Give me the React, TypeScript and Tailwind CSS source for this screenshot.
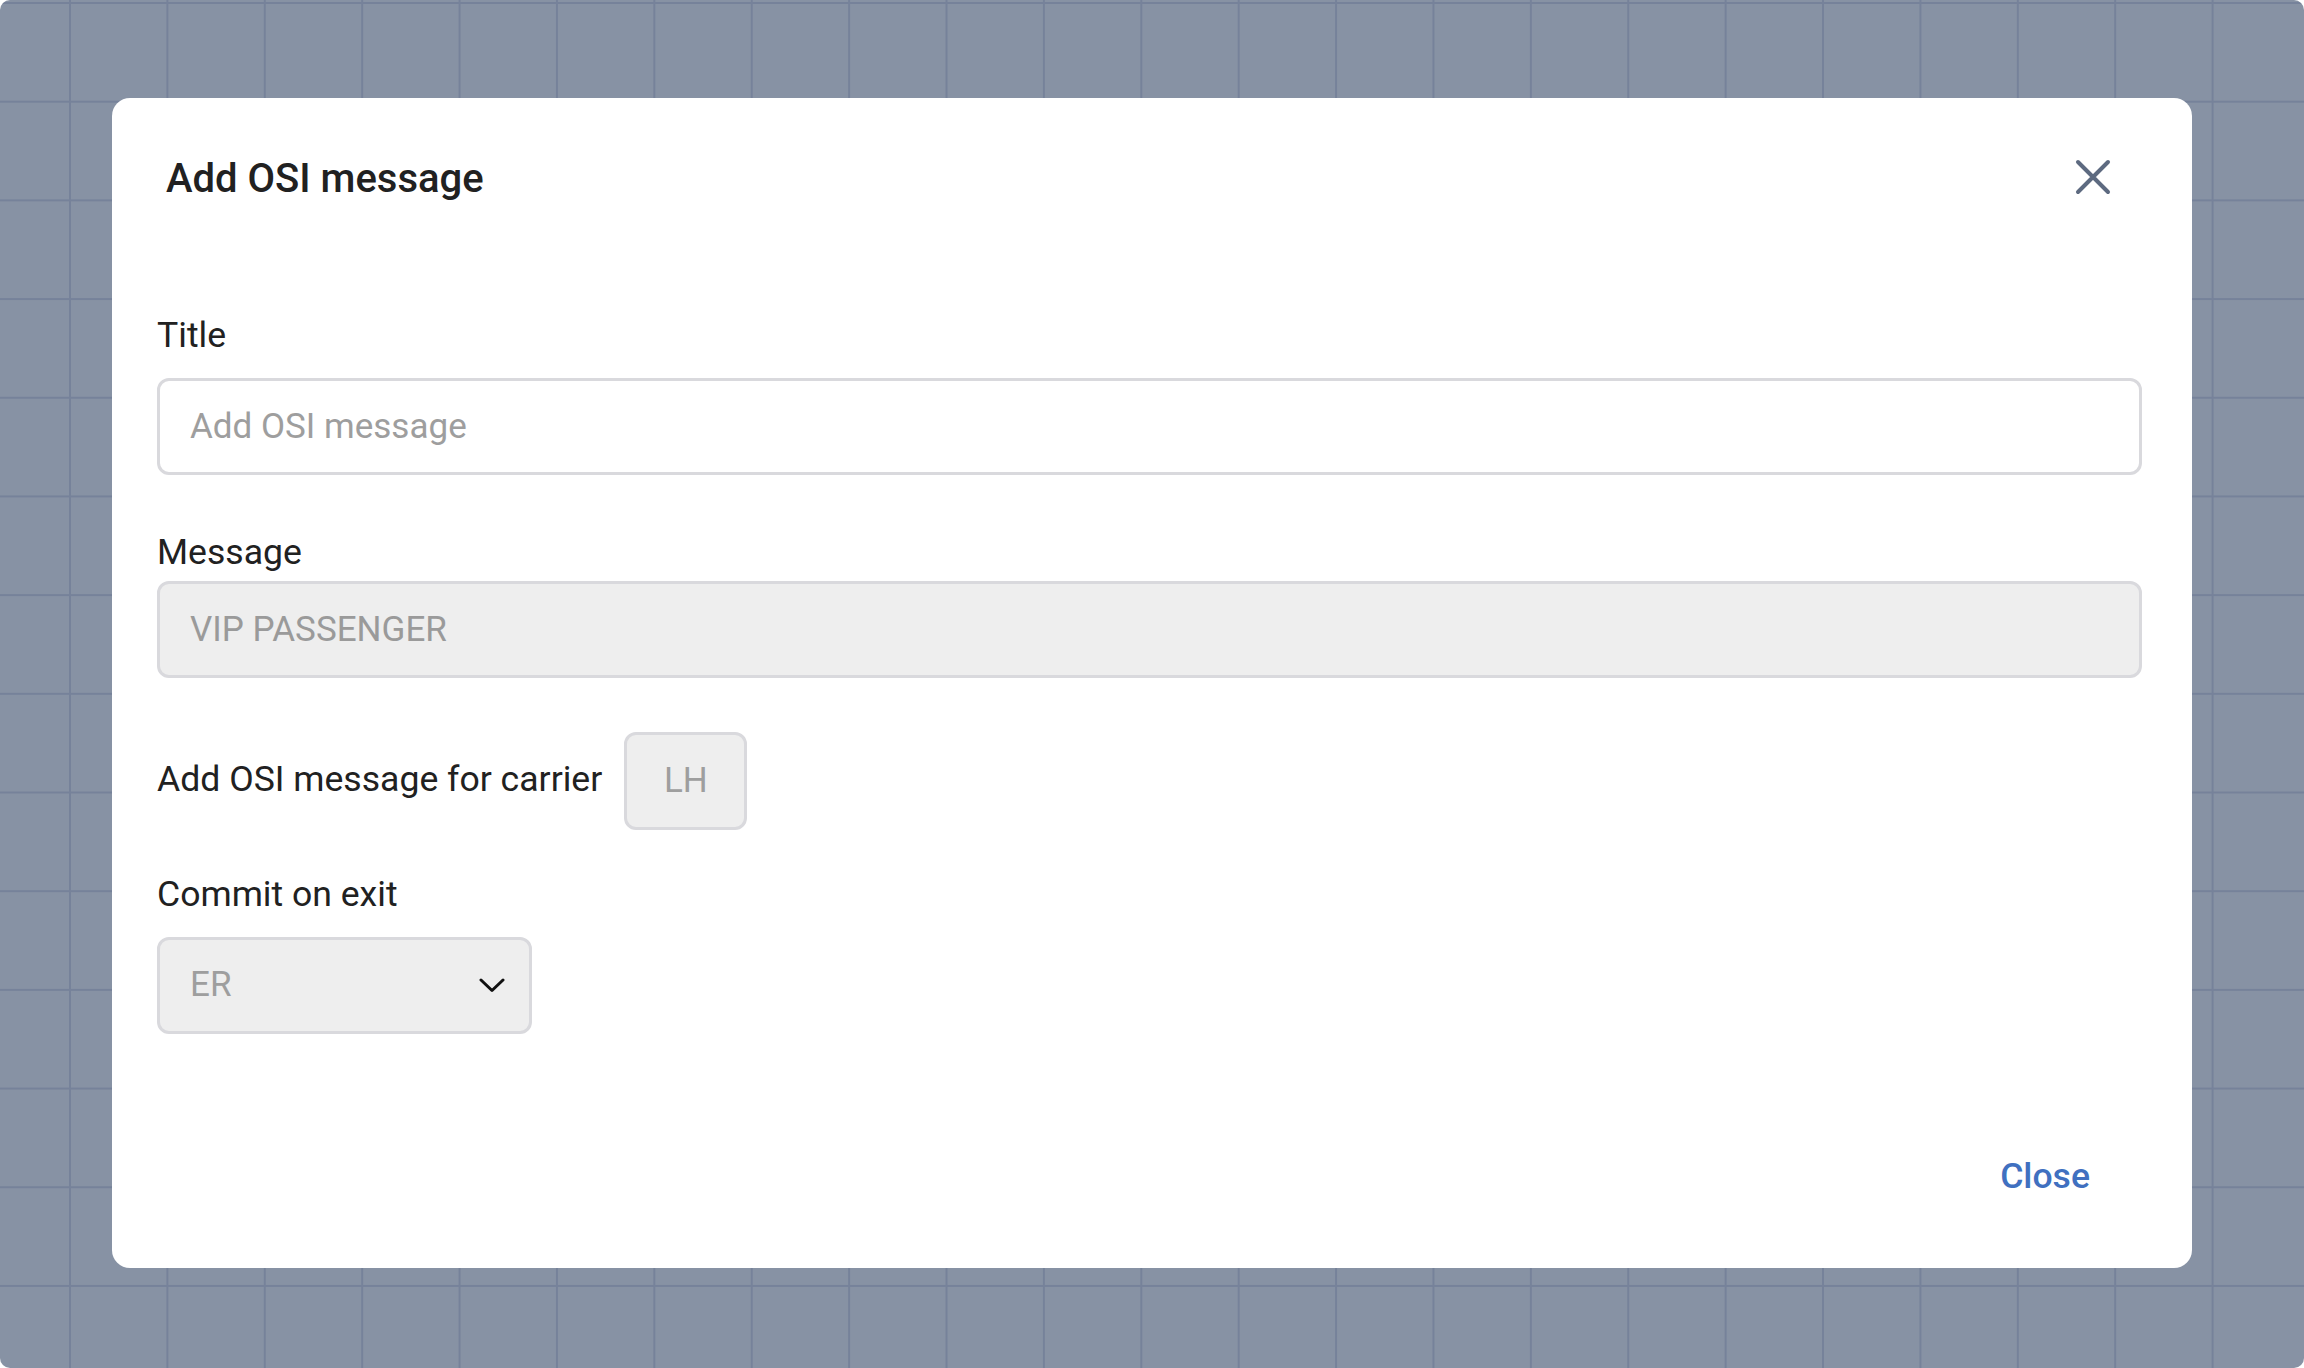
import { useState } from 'react';

const labelCls = "text-[35.6px] leading-[42px] text-[#212121]";
const fieldCls = "h-[97px] w-full rounded-[12px] border-[3px] border-[#d9d9dd] px-[30px] text-[35px] outline-none";

function CloseIcon() {
	return (
		<svg width="36" height="36" viewBox="0 0 36 36" fill="none" stroke="#5d6a80" strokeWidth={4} strokeLinecap="round">
			<path d="M3 3L33 33M33 3L3 33" />
		</svg>
	);
}

function Chevron() {
	return (
		<svg width="26" height="15" viewBox="0 0 26 15" fill="none" stroke="#111" strokeWidth={3} strokeLinecap="round" strokeLinejoin="round">
			<path d="M2 2L13 12.5L24 2" />
		</svg>
	);
}

export default function App() {
	const [title, setTitle] = useState('');

	return (
		<div className="min-h-screen bg-white font-['Roboto',sans-serif]">
			<div className="flex h-[1368px] w-full justify-center rounded-[10px] bg-[#8792a4] bg-[linear-gradient(to_right,#76829a_2px,transparent_2px),linear-gradient(to_bottom,#76829a_2px,transparent_2px)] bg-[size:97.4px_98.7px] bg-[position:69px_2px] pt-[98px]">
				<div className="flex h-fit w-[2080px] flex-col rounded-[18px] bg-white pt-[57px] pb-[71px] pl-[45px] pr-[50px]">
					{/* header */}
					<div className="flex items-start justify-between pl-[9px]">
						<h2 className="text-[40px] leading-[48px] font-medium text-[#212121]">Add OSI message</h2>
						<button className="mt-[4px] mr-[31px]" aria-label="Close">
							<CloseIcon />
						</button>
					</div>

					<div className={`mt-[111px] ${labelCls}`}>Title</div>
					<input
						value={title}
						onChange={(e) => setTitle(e.target.value)}
						placeholder="Add OSI message"
						className={`mt-[22px] bg-white text-[#212121] placeholder:text-[#9e9e9e] ${fieldCls}`}
					/>

					<div className={`mt-[56px] ${labelCls}`}>Message</div>
					<input
						value="VIP PASSENGER"
						disabled
						readOnly
						className={`mt-[8px] bg-[#eeeeee] text-[#9a9a9a] ${fieldCls}`}
					/>

					<div className="mt-[54px] flex items-center gap-[22px]">
						<span className={`-mt-[4px] ${labelCls}`}>Add OSI message for carrier</span>
						<div className="flex h-[98px] w-[123px] items-center justify-center rounded-[12px] border-[3px] border-[#d9d9dd] bg-[#eeeeee] text-[35px] text-[#9e9e9e]">
							LH
						</div>
					</div>

					<div className={`mt-[43px] ${labelCls}`}>Commit on exit</div>
					<div className="mt-[22px] flex h-[97px] w-[375px] items-center justify-between rounded-[12px] border-[3px] border-[#d9d9dd] bg-[#eeeeee] pl-[30px] pr-[24px]">
						<span className="text-[35px] text-[#9e9e9e]">ER</span>
						<Chevron />
					</div>

					<div className="mt-[121px] flex justify-end">
						<button className="mr-[52px] text-[35.6px] leading-[42px] font-medium text-[#4070c0]">Close</button>
					</div>
				</div>
			</div>
		</div>
	);
}
